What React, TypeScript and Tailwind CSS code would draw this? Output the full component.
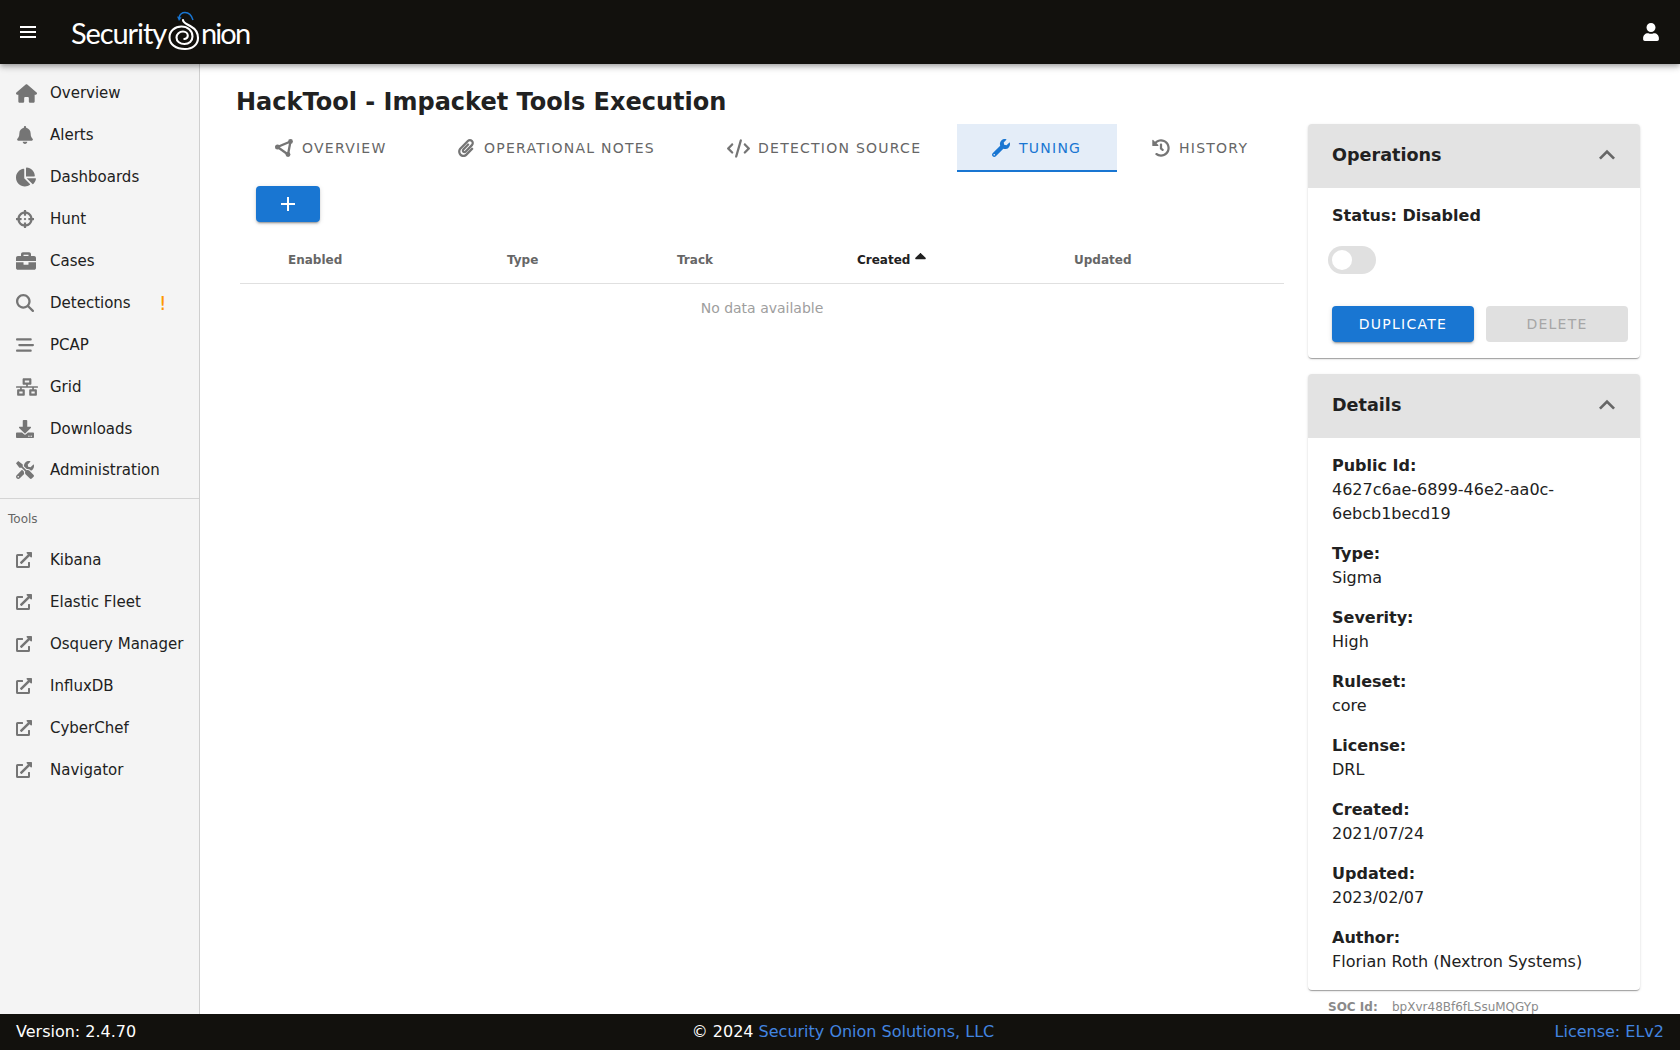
import React from 'react';
import { IconType } from 'react-icons';
import {
    FaBell,
    FaBriefcase,
    FaChartPie,
    FaCrosshairs,
    FaDownload,
    FaExternalLinkAlt,
    FaHistory,
    FaNetworkWired,
    FaPaperclip,
    FaSortUp,
    FaTools,
    FaUser,
    FaWrench,
} from 'react-icons/fa';
import { FaBarsStaggered, FaCode, FaHouse, FaMagnifyingGlass } from 'react-icons/fa6';

// --- Data ---

const navItems: { label: string; icon: IconType; size: number; warn?: boolean }[] = [
    { label: 'Overview', icon: FaHouse, size: 21 },
    { label: 'Alerts', icon: FaBell, size: 18 },
    { label: 'Dashboards', icon: FaChartPie, size: 20 },
    { label: 'Hunt', icon: FaCrosshairs, size: 18 },
    { label: 'Cases', icon: FaBriefcase, size: 20 },
    { label: 'Detections', icon: FaMagnifyingGlass, size: 18, warn: true },
    { label: 'PCAP', icon: FaBarsStaggered, size: 18 },
    { label: 'Grid', icon: FaNetworkWired, size: 22 },
    { label: 'Downloads', icon: FaDownload, size: 18 },
    { label: 'Administration', icon: FaTools, size: 18 },
];

const tools = ['Kibana', 'Elastic Fleet', 'Osquery Manager', 'InfluxDB', 'CyberChef', 'Navigator'];

const NodesIcon: IconType = ({ className, size }) => (
    <svg className={className} width={size} height={size} viewBox="0 0 18 18" fill="none" stroke="currentColor" strokeWidth="2.3">
        <path d="M15.5 2.5 L2.5 8 L13 15.5 Z" />
        <circle cx="15.5" cy="2.5" r="2.4" fill="currentColor" stroke="none" />
        <circle cx="2.5" cy="8" r="2.5" fill="currentColor" stroke="none" />
        <circle cx="13" cy="15.5" r="2.4" fill="currentColor" stroke="none" />
    </svg>
);

const tabs: { label: string; icon: IconType; width: string; iconSize: number; iconClass?: string; active?: boolean }[] = [
    { label: 'Overview', icon: NodesIcon, width: 'w-[182px]', iconSize: 18 },
    { label: 'Operational Notes', icon: FaPaperclip, width: 'w-[274px]', iconSize: 18 },
    { label: 'Detection Source', icon: FaCode, width: 'w-[261px]', iconSize: 23, iconClass: '-translate-x-[2px]' },
    { label: 'Tuning', icon: FaWrench, width: 'w-[160px]', iconSize: 18, active: true },
    { label: 'History', icon: FaHistory, width: 'w-[166px]', iconSize: 18 },
];

const details = [
    { label: 'Public Id:', value: '4627c6ae-6899-46e2-aa0c-6ebcb1becd19' },
    { label: 'Type:', value: 'Sigma' },
    { label: 'Severity:', value: 'High' },
    { label: 'Ruleset:', value: 'core' },
    { label: 'License:', value: 'DRL' },
    { label: 'Created:', value: '2021/07/24' },
    { label: 'Updated:', value: '2023/02/07' },
    { label: 'Author:', value: 'Florian Roth (Nextron Systems)' },
];

// --- Small pieces ---

const ChevronUp = () => (
    <svg className="w-8 h-8 text-[#666666] -mt-[2px]" viewBox="0 0 24 24" fill="currentColor">
        <path d="M7.41,15.41L12,10.83L16.59,15.41L18,14L12,8L6,14L7.41,15.41Z" />
    </svg>
);

const OnionMark = () => (
    <svg className="w-[32px] h-[42px] shrink-0" viewBox="0 0 32 42" fill="none">
        <path d="M11 7.5 C12 4 14.5 2.5 17 2.5 C20.5 2.5 23.5 5 25 10" stroke="#1976d2" strokeWidth="1.5" />
        <path d="M9 6.5 L11 11 L13.5 7.5 Z" fill="#1976d2" />
        <path
            d="M15 10 C15 13 19 14 23 16.5 C27.5 19 30 23 30 28 C30 34.5 24.5 39 17 39 C8 39 1.5 34.5 1.5 27.5 C1.5 21 7 16.5 13.5 16.5 C19.5 16.5 24.5 20.5 24.5 26.5 C24.5 31 21 34 16.5 34 C12 34 8.5 31.5 8.5 27.5 C8.5 24 11.5 21.5 15 21.5 C17.8 21.5 19.8 23.5 19.8 25.8 C19.8 27.8 18 29 16.3 29"
            stroke="white"
            strokeWidth="2.1"
            strokeLinecap="round"
        />
    </svg>
);

const Logo = () => (
    <div className="flex items-center ml-[35px] h-16 font-['Lato',sans-serif] font-normal text-white text-[29px] tracking-[-1.1px]">
        <span className="mt-[2px] w-[97px]">Security</span>
        <span className="-mt-[2px]"><OnionMark /></span>
        <span className="mt-[2px] ml-[1px] tracking-[-1.9px]">nion</span>
    </div>
);

const Panel = ({ title, children }: { title: string; children: React.ReactNode }) => (
    <section className="bg-white rounded shadow-[0_2px_1px_-1px_rgba(0,0,0,0.2),0_1px_1px_0_rgba(0,0,0,0.14),0_1px_3px_0_rgba(0,0,0,0.12)]">
        <header className="h-16 bg-[#e3e3e3] rounded-t flex items-center justify-between pl-6 pr-[17px]">
            <h2 className="text-[17.6px] font-bold text-[#212121] -mt-[1px]">{title}</h2>
            <ChevronUp />
        </header>
        {children}
    </section>
);

// --- Sections ---

const TopBar = () => (
    <header className="h-16 shrink-0 bg-[#12110d] flex items-center relative z-10 shadow-[0_2px_4px_-1px_rgba(0,0,0,0.2),0_4px_5px_0_rgba(0,0,0,0.14),0_1px_10px_0_rgba(0,0,0,0.12)]">
        <div className="ml-5 w-4 flex flex-col gap-[3px]">
            <span className="h-[2px] bg-white" />
            <span className="h-[2px] bg-white" />
            <span className="h-[2px] bg-white" />
        </div>
        <Logo />
        <FaUser className="ml-auto mr-5 text-white" size={18} />
    </header>
);

const Sidebar = () => (
    <aside className="w-[200px] shrink-0 bg-[#f4f4f4] border-r border-[#cfcfcf] pt-2">
        <nav>
            {navItems.map(({ label, icon: Icon, size, warn }) => (
                <div key={label} className="h-[42px] last:-mt-[1px] flex items-center text-[#212121]">
                    <span className="w-[50px] pl-4 shrink-0">
                        <Icon className="text-[#757575]" size={size} />
                    </span>
                    <span className="text-[15px]">{label}</span>
                    {warn && <span className="ml-[28px] text-[#ff9800] text-[20px] leading-none">!</span>}
                </div>
            ))}
        </nav>
        <div className="border-t border-[#d4d4d4] mt-[7px] mb-[12px]" />
        <p className="pl-2 text-xs text-[#666666] h-4 leading-4 mb-[12px]">Tools</p>
        {tools.map((tool) => (
            <div key={tool} className="h-[42px] flex items-center text-[#212121]">
                <span className="w-[50px] pl-4 shrink-0">
                    <FaExternalLinkAlt className="text-[#757575]" size={16} />
                </span>
                <span className="text-[15px]">{tool}</span>
            </div>
        ))}
    </aside>
);

const TabBar = () => (
    <div className="flex h-12">
        {tabs.map(({ label, icon: Icon, width, iconSize, iconClass, active }) => (
            <div
                key={label}
                className={`${width} h-12 pl-8 flex items-center text-sm uppercase tracking-[0.0892857em] ${
                    active ? 'bg-[#e4edf8] text-[#1976d2] shadow-[inset_0_-2px_0_#1976d2]' : 'text-[#666666]'
                }`}
            >
                <span className="w-6 flex justify-center mr-[6px] shrink-0">
                    <Icon className={`${active ? 'text-[#1976d2]' : 'text-[#757575]'} ${iconClass ?? ''}`} size={iconSize} />
                </span>
                {label}
            </div>
        ))}
    </div>
);

const TuningTable = () => (
    <div className="mt-[13px]">
        <div className="grid grid-cols-[48px_219px_170px_180px_217px_1fr] h-[49px] pt-[1px] items-center border-b border-[#e0e0e0] text-xs font-bold text-[#666666]">
            <span />
            <span>Enabled</span>
            <span>Type</span>
            <span>Track</span>
            <span className="text-[#212121] flex items-center">
                Created
                <FaSortUp className="ml-[1px] mt-[1px]" size={19} />
            </span>
            <span>Updated</span>
        </div>
        <p className="h-12 flex items-center justify-center text-sm text-[#9e9e9e]">No data available</p>
    </div>
);

const RightColumn = () => (
    <div className="w-[332px] shrink-0 flex flex-col gap-4">
        <Panel title="Operations">
            <div className="px-6 pt-4 pb-4">
                <p className="font-bold text-base text-[#212121] leading-6">Status: Disabled</p>
                <div className="mt-[18px] -ml-1 w-12 h-7 rounded-full bg-[#e0e0e0] flex items-center pl-1">
                    <span className="w-5 h-5 rounded-full bg-white" />
                </div>
                <div className="mt-8 flex gap-3 -mr-3">
                    <button className="w-[142px] h-9 rounded bg-[#1976d2] text-white text-sm uppercase tracking-[0.0892857em] shadow-[0_3px_1px_-2px_rgba(0,0,0,0.2),0_2px_2px_0_rgba(0,0,0,0.14),0_1px_5px_0_rgba(0,0,0,0.12)]">
                        Duplicate
                    </button>
                    <button className="w-[142px] h-9 rounded bg-[#e0e0e0] text-[#a6a6a6] text-sm uppercase tracking-[0.0892857em]">
                        Delete
                    </button>
                </div>
            </div>
        </Panel>
        <Panel title="Details">
            <div className="px-6 pt-4 pb-4 flex flex-col gap-4">
                {details.map(({ label, value }) => (
                    <div key={label} className="text-base leading-6 text-[#212121]">
                        <p className="font-bold">{label}</p>
                        <p>{value}</p>
                    </div>
                ))}
            </div>
        </Panel>
        <p className="-mt-[7px] pl-5 text-xs text-[#8a8a8a] leading-4 flex">
            <span className="font-bold w-[64px]">SOC Id:</span>
            <span>bpXvr48Bf6fLSsuMQGYp</span>
        </p>
    </div>
);

const Footer = () => (
    <footer className="h-9 shrink-0 bg-[#12110d] text-white text-base px-4 grid grid-cols-3 items-center">
        <span>Version: 2.4.70</span>
        <span className="pl-[6px] text-center whitespace-nowrap">
            © 2024 <span className="text-[#4285e0]">Security Onion Solutions, LLC</span>
        </span>
        <span className="text-right text-[#4285e0]">License: ELv2</span>
    </footer>
);

// --- Main Component ---

const App: React.FC = () => (
    <div className="h-screen flex flex-col overflow-hidden bg-white font-['DejaVu_Sans',sans-serif]">
        <TopBar />
        <div className="flex-1 flex min-h-0">
            <Sidebar />
            <main className="flex-1 pl-10 pr-10 min-w-0">
                <h1 className="-ml-1 mt-[22px] h-8 leading-8 text-2xl font-bold text-[#212121]">
                    HackTool - Impacket Tools Execution
                </h1>
                <div className="mt-[6px] flex gap-6">
                    <div className="flex-1 min-w-0">
                        <TabBar />
                        <button className="ml-4 mt-[14px] w-16 h-9 rounded bg-[#1976d2] text-white flex items-center justify-center shadow-[0_3px_1px_-2px_rgba(0,0,0,0.2),0_2px_2px_0_rgba(0,0,0,0.14),0_1px_5px_0_rgba(0,0,0,0.12)]">
                            <svg className="w-6 h-6" viewBox="0 0 24 24" fill="currentColor">
                                <path d="M19,13H13V19H11V13H5V11H11V5H13V11H19V13Z" />
                            </svg>
                        </button>
                        <TuningTable />
                    </div>
                    <RightColumn />
                </div>
            </main>
        </div>
        <Footer />
    </div>
);

export default App;
